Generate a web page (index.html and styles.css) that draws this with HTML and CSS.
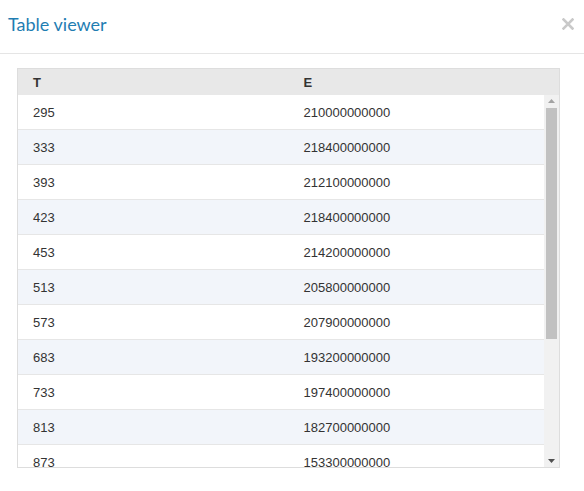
FILE: index.html
```html
<!DOCTYPE html>
<html>
<head>
<meta charset="utf-8">
<link rel="stylesheet" href="styles.css">
</head>
<body>
<div class="modal">
  <div class="modal-header">
    <h1 class="title">Table viewer</h1>
    <button class="close" aria-label="Close">
      <svg width="12" height="12" viewBox="0 0 12 12"><path d="M1.5 1.5 L10.5 10.5 M10.5 1.5 L1.5 10.5" stroke="#c9c9c9" stroke-width="2.6" stroke-linecap="square"/></svg>
    </button>
  </div>
  <div class="modal-body">
    <div class="grid">
      <div class="grid-head">
        <div class="cell">T</div>
        <div class="cell">E</div>
      </div>
      <div class="grid-body">
        <div class="rows">
          <div class="row"><div class="cell">295</div><div class="cell">210000000000</div></div>
          <div class="row"><div class="cell">333</div><div class="cell">218400000000</div></div>
          <div class="row"><div class="cell">393</div><div class="cell">212100000000</div></div>
          <div class="row"><div class="cell">423</div><div class="cell">218400000000</div></div>
          <div class="row"><div class="cell">453</div><div class="cell">214200000000</div></div>
          <div class="row"><div class="cell">513</div><div class="cell">205800000000</div></div>
          <div class="row"><div class="cell">573</div><div class="cell">207900000000</div></div>
          <div class="row"><div class="cell">683</div><div class="cell">193200000000</div></div>
          <div class="row"><div class="cell">733</div><div class="cell">197400000000</div></div>
          <div class="row"><div class="cell">813</div><div class="cell">182700000000</div></div>
          <div class="row"><div class="cell">873</div><div class="cell">153300000000</div></div>
          <div class="row"><div class="cell">933</div><div class="cell">147000000000</div></div>
        </div>
        <div class="scrollbar">
          <div class="sb-btn sb-up"><svg width="7" height="4" viewBox="0 0 7 4"><path d="M3.5 0 L7 4 L0 4 Z" fill="#a3a3a3"/></svg></div>
          <div class="sb-track"><div class="sb-thumb"></div></div>
          <div class="sb-btn sb-down"><svg width="7" height="4" viewBox="0 0 7 4"><path d="M0 0 L7 0 L3.5 4 Z" fill="#505050"/></svg></div>
        </div>
      </div>
    </div>
  </div>
</div>
</body>
</html>
```
FILE: styles.css
```css
html, body {
  margin: 0;
  padding: 0;
  background: #ffffff;
}
.modal {
  width: 584px;
  height: 491px;
  font-family: "Liberation Sans", Arial, sans-serif;
}
.modal-header {
  height: 53px;
  border-bottom: 1px solid #e5e5e5;
  display: flex;
  align-items: flex-start;
  justify-content: space-between;
  padding: 0 10px 0 8px;
}
.title {
  margin: 13px 0 0 0;
  font-family: Lato, "Liberation Sans", sans-serif;
  font-weight: 400;
  font-size: 18px;
  color: #1f7db2;
  line-height: 22px;
}
.close {
  border: 0;
  background: none;
  padding: 0;
  margin: 18px 0 0 0;
  width: 12px;
  height: 12px;
  display: flex;
}
.modal-body {
  padding: 14px 24px 0 17px;
}
.grid {
  width: 541px;
  border: 1px solid #dddddd;
}
.grid-head {
  display: grid;
  grid-template-columns: 270.5px 270.5px;
  height: 26px;
  background: #e8e8e8;
  font-weight: bold;
  color: #333333;
  font-size: 13px;
}
.grid-head .cell {
  display: flex;
  align-items: center;
  padding-left: 15px;
}
.grid-body {
  height: 372px;
  display: flex;
}
.rows {
  flex: 1;
  overflow: hidden;
}
.row {
  display: grid;
  grid-template-columns: 270.5px 1fr;
  height: 34px;
  border-bottom: 1px solid #e6e6e6;
  font-size: 13px;
  color: #333333;
}
.row:nth-child(even) {
  background: #f2f5fa;
}
.row .cell {
  display: flex;
  align-items: center;
  padding-left: 15px;
}
.scrollbar {
  width: 15px;
  background: #f1f1f1;
  display: flex;
  flex-direction: column;
}
.sb-btn {
  height: 13px;
  display: flex;
  align-items: center;
  justify-content: center;
}
.sb-up {
  padding-bottom: 1px;
  box-sizing: border-box;
}
.sb-track {
  flex: 1;
  padding: 0 2px;
}
.sb-thumb {
  height: 231px;
  background: #c1c1c1;
}
```
